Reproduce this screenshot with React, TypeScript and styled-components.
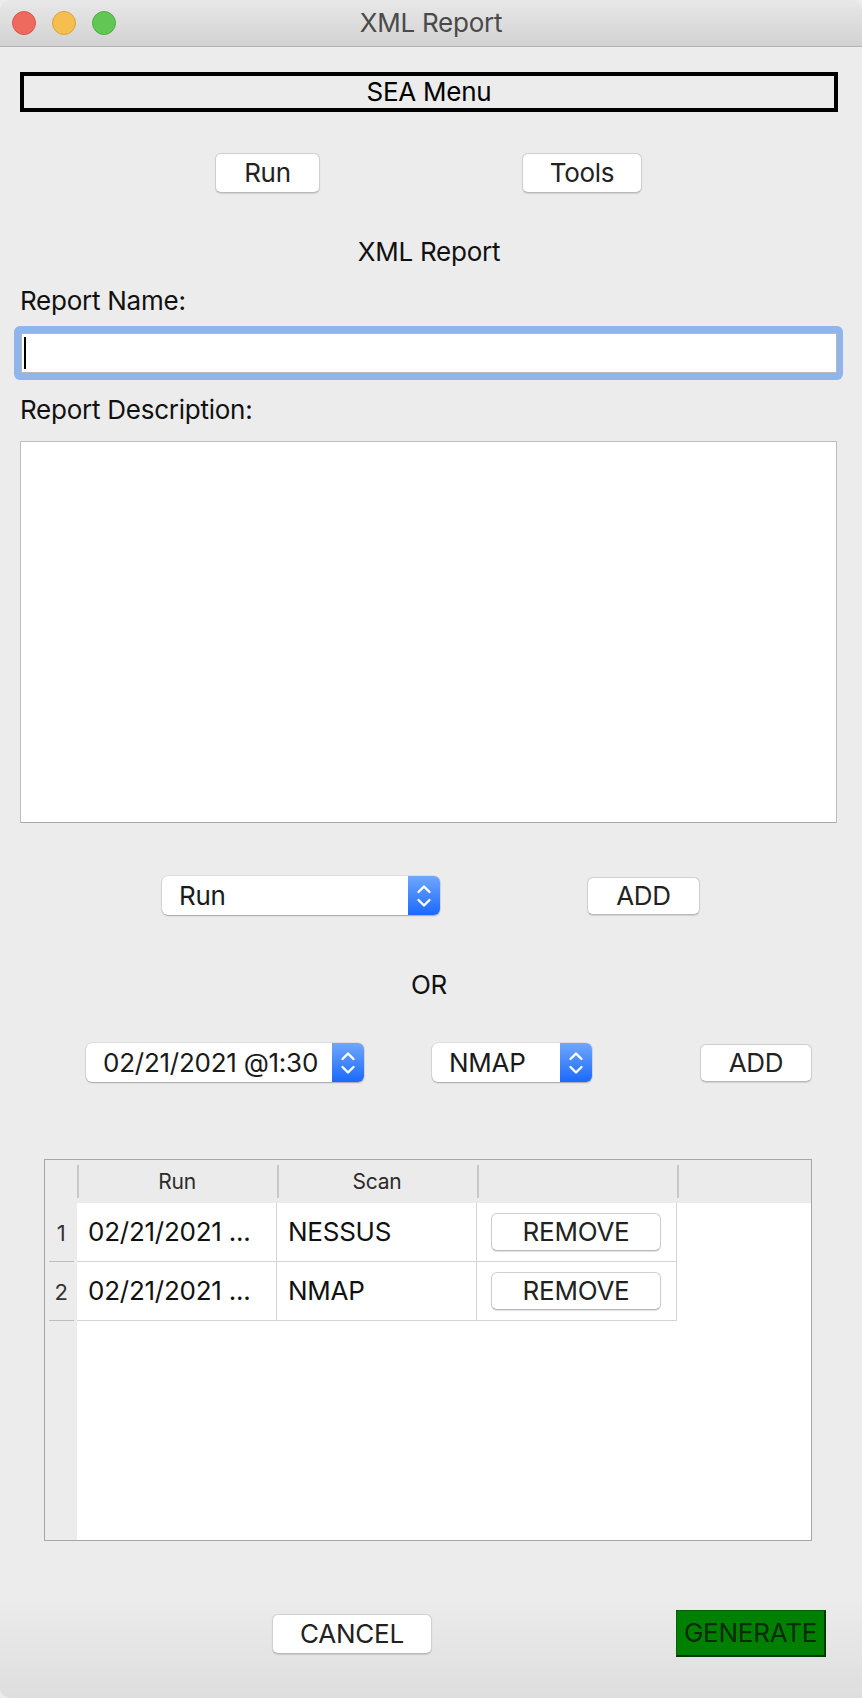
import { FC } from "react";
import styled, { createGlobalStyle } from "styled-components";

const GlobalStyle = createGlobalStyle`
  html, body {
    margin: 0;
    padding: 0;
    background: #ececec;
  }
  * {
    box-sizing: border-box;
  }
`;

const Window = styled.div`
  width: 862px;
  height: 1698px;
  display: flex;
  flex-direction: column;
  background: linear-gradient(to bottom, #ececec 0%, #ececec 94%, #dedede 100%);
  font-family: Inter, "Noto Sans", sans-serif;
  font-size: 26px;
  line-height: 32px;
  letter-spacing: -0.25px;
  color: #111;
  overflow: hidden;
  border-radius: 10px 10px 0 10px;
`;

const TitleBar = styled.div`
  height: 47px;
  flex-shrink: 0;
  display: flex;
  align-items: center;
  padding-left: 12px;
  background: linear-gradient(to bottom, #e8e8e8, #d2d2d2);
  border-bottom: 1px solid #b3b3b3;
  position: relative;
`;

const Light = styled.span<{ $color: string; $edge: string }>`
  width: 24px;
  height: 24px;
  border-radius: 50%;
  background: ${(p) => p.$color};
  border: 1px solid ${(p) => p.$edge};
  margin-right: 16px;
`;

const Title = styled.div`
  position: absolute;
  left: 0;
  right: 0;
  text-align: center;
  color: #4a4a4a;
  pointer-events: none;
`;

const Content = styled.div`
  display: flex;
  flex-direction: column;
  padding: 0 24px 0 20px;
`;

const MenuBox = styled.div`
  margin-top: 25px;
  height: 40px;
  border: 4px solid #000;
  display: flex;
  align-items: center;
  justify-content: center;
  color: #000;
`;

const Row = styled.div<{ $top: number; $left: number; $gap: number }>`
  display: flex;
  align-items: center;
  margin-top: ${(p) => p.$top}px;
  padding-left: ${(p) => p.$left}px;
  gap: ${(p) => p.$gap}px;
`;

const Button = styled.div<{ $w: number; $h?: number }>`
  width: ${(p) => p.$w}px;
  height: ${(p) => p.$h ?? 40}px;
  background: #fff;
  border: 1px solid #cfcfcf;
  border-bottom-color: #b9b9b9;
  border-radius: 6px;
  box-shadow: 0 1px 1px rgba(0, 0, 0, 0.12);
  display: flex;
  align-items: center;
  justify-content: center;
  color: #222;
  flex-shrink: 0;
`;

const Heading = styled.div<{ $top: number }>`
  margin-top: ${(p) => p.$top}px;
  text-align: center;
  color: #111;
`;

const Label = styled.div<{ $top: number }>`
  margin-top: ${(p) => p.$top}px;
  color: #111;
`;

const FocusRing = styled.div`
  margin-top: 9px;
  margin-left: -6px;
  margin-right: -5px;
  padding: 7px 6px 7px 7px;
  background: #8fb5ec;
  border-radius: 6px;
`;

const TextField = styled.div`
  height: 40px;
  background: #fff;
  border: 1px solid #b8b8b8;
  display: flex;
  align-items: center;
  padding-left: 2px;
`;

const Caret = styled.span`
  width: 2px;
  height: 32px;
  background: #000;
`;

const TextArea = styled.div`
  margin-top: 15px;
  margin-right: 1px;
  height: 382px;
  background: #fff;
  border: 1px solid #bdbdbd;
  border-bottom-color: #aaa;
`;

const Select = styled.div<{ $w: number }>`
  width: ${(p) => p.$w}px;
  height: 39px;
  display: flex;
  flex-shrink: 0;
  border-radius: 6px;
  box-shadow: 0 1px 1.5px rgba(0, 0, 0, 0.25), 0 0 0 0.5px rgba(0, 0, 0, 0.12);
  background: #fff;
`;

const SelectText = styled.div`
  flex: 1;
  display: flex;
  align-items: center;
  padding-left: 17px;
  color: #1a1a1a;
  white-space: nowrap;
`;

const Stepper = styled.div`
  width: 32px;
  flex-shrink: 0;
  border-radius: 0 6px 6px 0;
  background: linear-gradient(to bottom, #6fa7fc, #1b69fd);
  display: flex;
  align-items: center;
  justify-content: center;
`;

const Table = styled.div`
  margin: 77px 26px 0 24px;
  height: 382px;
  border: 1px solid #a6a6a6;
  background: #fff;
  display: flex;
`;

const Gutter = styled.div`
  width: 32px;
  flex-shrink: 0;
  background: #ececec;
  display: flex;
  flex-direction: column;
`;

const GutterHead = styled.div`
  height: 43px;
`;

const GutterCell = styled.div`
  height: 59px;
  display: flex;
  align-items: center;
  justify-content: center;
  font-size: 22px;
  color: #333;
  position: relative;
  &::after {
    content: "";
    position: absolute;
    left: 4px;
    right: 3px;
    bottom: 0;
    height: 1px;
    background: #bdbdbd;
  }
`;

const TableMain = styled.div`
  flex: 1;
  display: flex;
  flex-direction: column;
`;

const HeaderRow = styled.div`
  height: 43px;
  display: flex;
  background: #ebebeb;
`;

const HeaderCell = styled.div<{ $fill?: boolean }>`
  width: ${(p) => (p.$fill ? "auto" : "200px")};
  flex: ${(p) => (p.$fill ? 1 : "none")};
  position: relative;
  display: flex;
  align-items: center;
  justify-content: center;
  font-size: 21px;
  color: #2b2b2b;
  &::before {
    content: "";
    position: absolute;
    left: 0;
    top: 5px;
    bottom: 5px;
    width: 2px;
    background: #c8c8c8;
  }
`;

const BodyRow = styled.div`
  display: flex;
  width: 600px;
`;

const BodyCell = styled.div`
  width: 200px;
  height: 59px;
  border-right: 1px solid #d4d4d4;
  border-bottom: 1px solid #d4d4d4;
  display: flex;
  align-items: center;
  padding-left: 11px;
  color: #111;
  white-space: nowrap;
`;

const ActionCell = styled(BodyCell)`
  padding-left: 14px;
`;

const GenerateButton = styled.div`
  width: 150px;
  height: 47px;
  background: #008000;
  border: 1px solid #006300;
  border-right: 2px solid #003800;
  border-bottom: 2px solid #003800;
  display: flex;
  align-items: center;
  justify-content: center;
  color: #0c2a0c;
`;

const Chevrons: FC = () => (
  <svg width="16" height="28" viewBox="0 0 16 28">
    <polyline
      points="2.5,10 8,4.5 13.5,10"
      fill="none"
      stroke="#fff"
      strokeWidth="2.4"
      strokeLinecap="round"
      strokeLinejoin="round"
    />
    <polyline
      points="2.5,18 8,23.5 13.5,18"
      fill="none"
      stroke="#fff"
      strokeWidth="2.4"
      strokeLinecap="round"
      strokeLinejoin="round"
    />
  </svg>
);

const Dropdown: FC<{ width: number; value: string }> = ({ width, value }) => (
  <Select $w={width}>
    <SelectText>{value}</SelectText>
    <Stepper>
      <Chevrons />
    </Stepper>
  </Select>
);

const rows = [
  { n: 1, run: "02/21/2021 ...", scan: "NESSUS" },
  { n: 2, run: "02/21/2021 ...", scan: "NMAP" },
];

export default function App() {
  return (
    <Window>
      <GlobalStyle />
      <TitleBar>
        <Light $color="#ee6a5f" $edge="#d8564c" />
        <Light $color="#f6be4f" $edge="#dca23b" />
        <Light $color="#62c655" $edge="#4fae43" />
        <Title>XML Report</Title>
      </TitleBar>
      <Content>
        <MenuBox>SEA Menu</MenuBox>
        <Row $top={41} $left={195} $gap={202}>
          <Button $w={105}>Run</Button>
          <Button $w={120}>Tools</Button>
        </Row>
        <Heading $top={43}>XML Report</Heading>
        <Label $top={17}>Report Name:</Label>
        <FocusRing>
          <TextField>
            <Caret />
          </TextField>
        </FocusRing>
        <Label $top={14}>Report Description:</Label>
        <TextArea />
        <Row $top={53} $left={142} $gap={147}>
          <Dropdown width={278} value="Run" />
          <Button $w={113} $h={38}>ADD</Button>
        </Row>
        <Heading $top={54}>OR</Heading>
        <Row $top={42} $left={66} $gap={68}>
          <Dropdown width={278} value="02/21/2021 @1:30" />
          <Dropdown width={160} value="NMAP" />
          <Button $w={112} $h={38} style={{ marginLeft: 40 }}>
            ADD
          </Button>
        </Row>
        <Table>
          <Gutter>
            <GutterHead />
            {rows.map((r) => (
              <GutterCell key={r.n}>{r.n}</GutterCell>
            ))}
          </Gutter>
          <TableMain>
            <HeaderRow>
              <HeaderCell>Run</HeaderCell>
              <HeaderCell>Scan</HeaderCell>
              <HeaderCell />
              <HeaderCell $fill />
            </HeaderRow>
            {rows.map((r) => (
              <BodyRow key={r.n}>
                <BodyCell>{r.run}</BodyCell>
                <BodyCell>{r.scan}</BodyCell>
                <ActionCell>
                  <Button $w={170} $h={38}>REMOVE</Button>
                </ActionCell>
              </BodyRow>
            ))}
          </TableMain>
        </Table>
        <Row $top={69} $left={252} $gap={244}>
          <Button $w={160} $h={40}>CANCEL</Button>
          <GenerateButton>GENERATE</GenerateButton>
        </Row>
      </Content>
    </Window>
  );
}
